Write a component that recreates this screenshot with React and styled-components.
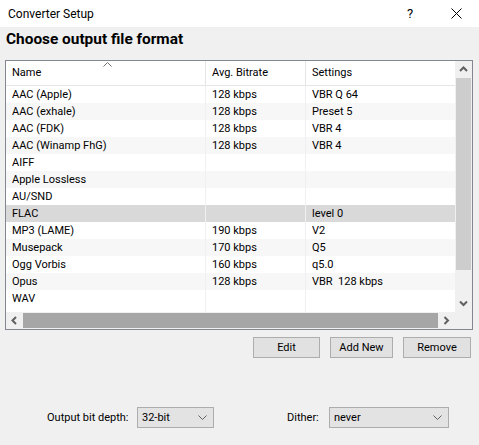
import React from "react";
import styled, { createGlobalStyle } from "styled-components";

const Global = createGlobalStyle`
  html, body { margin: 0; padding: 0; background: #f0f0f0; }
  body { font-family: Roboto, "Liberation Sans", sans-serif; font-size: 11px; color: #000; }
`;

const Window = styled.div`
  width: 479px;
  height: 445px;
  background: #f0f0f0;
  display: flex;
  flex-direction: column;
  overflow: hidden;
`;

const TitleBar = styled.div`
  height: 27px;
  background: #fff;
  display: flex;
  align-items: center;
  padding-left: 8px;
  font-size: 12px;
`;

const TitleText = styled.div`
  flex: 1;
`;

const TitleButton = styled.div`
  width: 46px;
  display: flex;
  justify-content: center;
  align-items: center;
  font-size: 13px;
`;

const Heading = styled.div`
  height: 33px;
  padding: 2px 0 0 6px;
  box-sizing: border-box;
  line-height: 20px;
  font-weight: bold;
  font-size: 15.4px;
`;

const ListBox = styled.div`
  margin-left: 5px;
  width: 468px;
  height: 270px;
  box-sizing: border-box;
  border: 1px solid #828790;
  background: #fff;
  display: grid;
  grid-template-columns: 449px 17px;
  grid-template-rows: 251px 17px;
`;

const TableArea = styled.div`
  overflow: hidden;
  display: flex;
  flex-direction: column;
`;

const HeaderRow = styled.div`
  position: relative;
  height: 25px;
  flex: none;
  box-sizing: border-box;
  border-bottom: 1px solid #e5e5e5;
  display: grid;
  grid-template-columns: 200px 100px 149px;
`;

const HeaderCell = styled.div`
  display: flex;
  align-items: center;
  padding-left: 6px;
  border-right: ${(p) => (p.$last ? "none" : "1px solid #e5e5e5")};
  padding-bottom: 1px;
`;

const SortArrow = styled.svg`
  position: absolute;
  left: 97px;
  top: 1px;
`;

const Row = styled.div`
  height: 17px;
  flex: none;
  display: grid;
  grid-template-columns: 200px 100px 149px;
  background: ${(p) => (p.$selected ? "#d9d9d9" : p.$alt ? "#f7f7f7" : "#fff")};
`;

const Cell = styled.div`
  padding-left: 6px;
  line-height: 17px;
  white-space: pre;
  border-right: ${(p) => (p.$last ? "none" : "1px solid #f0f0f0")};
`;

const Filler = styled.div`
  flex: 1;
  display: grid;
  grid-template-columns: 200px 100px 149px;
`;

const VScroll = styled.div`
  background: #f0f0f0;
  display: flex;
  flex-direction: column;
`;

const HScroll = styled.div`
  background: #f0f0f0;
  display: flex;
`;

const ArrowBtn = styled.div`
  width: 17px;
  height: 17px;
  flex: none;
  display: flex;
  align-items: center;
  justify-content: center;
`;

const VTrack = styled.div`
  flex: 1;
  display: flex;
  flex-direction: column;
  padding: 0 1px;
`;

const VThumb = styled.div`
  height: 192px;
  background: #cdcdcd;
`;

const HTrack = styled.div`
  flex: 1;
  display: flex;
  padding: 1px 0;
`;

const HThumb = styled.div`
  width: 415px;
  background: #a6a6a6;
`;

const Corner = styled.div`
  background: #f0f0f0;
`;

const ButtonRow = styled.div`
  display: flex;
  justify-content: flex-end;
  gap: 10px;
  padding-right: 8px;
  margin-top: 7px;
`;

const Button = styled.div`
  width: ${(p) => p.$w}px;
  height: 21px;
  box-sizing: border-box;
  background: #e1e1e1;
  border: 1px solid #adadad;
  display: flex;
  align-items: center;
  justify-content: center;
`;

const Options = styled.div`
  display: grid;
  grid-template-columns: 90px 77px 73px 42px 120px;
  align-items: center;
  margin-top: 49px;
  padding-left: 47px;
`;

const Label = styled.div`
  white-space: nowrap;
  grid-column: ${(p) => p.$col};
`;

const Select = styled.div`
  height: 21px;
  box-sizing: border-box;
  background: #e3e3e3;
  border: 1px solid #adadad;
  display: flex;
  align-items: center;
  padding-left: 4px;
  padding-right: 6px;
  grid-column: ${(p) => p.$col};
`;

const SelectText = styled.div`
  flex: 1;
`;

const Chevron = ({ dir }) => {
  const pts = {
    up: "1,6 4.5,2.5 8,6",
    down: "1,2.5 4.5,6 8,2.5",
    left: "6,1 2.5,4.5 6,8",
    right: "2.5,1 6,4.5 2.5,8",
  }[dir];
  return (
    <svg width="9" height="9" viewBox="0 0 9 9">
      <polyline points={pts} fill="none" stroke="#606060" strokeWidth="2" />
    </svg>
  );
};

const SmallChevron = () => (
  <svg width="9" height="6" viewBox="0 0 9 6">
    <polyline points="0.5,0.5 4.5,4.5 8.5,0.5" fill="none" stroke="#606060" strokeWidth="1" />
  </svg>
);

const rows = [
  ["AAC (Apple)", "128 kbps", "VBR Q 64"],
  ["AAC (exhale)", "128 kbps", "Preset 5"],
  ["AAC (FDK)", "128 kbps", "VBR 4"],
  ["AAC (Winamp FhG)", "128 kbps", "VBR 4"],
  ["AIFF", "", ""],
  ["Apple Lossless", "", ""],
  ["AU/SND", "", ""],
  ["FLAC", "", "level 0"],
  ["MP3 (LAME)", "190 kbps", "V2"],
  ["Musepack", "170 kbps", "Q5"],
  ["Ogg Vorbis", "160 kbps", "q5.0"],
  ["Opus", "128 kbps", "VBR  128 kbps"],
  ["WAV", "", ""],
];

export default function App() {
  return (
    <>
      <Global />
      <Window>
        <TitleBar>
          <TitleText>Converter Setup</TitleText>
          <TitleButton>?</TitleButton>
          <TitleButton>
            <svg width="11" height="11" viewBox="0 0 11 11">
              <path d="M0.5 0.5 L10.5 10.5 M10.5 0.5 L0.5 10.5" stroke="#000" strokeWidth="1" />
            </svg>
          </TitleButton>
        </TitleBar>
        <Heading>Choose output file format</Heading>
        <ListBox>
          <TableArea>
            <HeaderRow>
              <SortArrow width="9" height="5" viewBox="0 0 9 5">
                <polyline points="0.5,4.5 4.5,0.5 8.5,4.5" fill="none" stroke="#707070" strokeWidth="1" />
              </SortArrow>
              <HeaderCell>Name</HeaderCell>
              <HeaderCell>Avg. Bitrate</HeaderCell>
              <HeaderCell $last>Settings</HeaderCell>
            </HeaderRow>
            {rows.map((r, i) => (
              <Row key={r[0]} $alt={i % 2 === 1} $selected={r[0] === "FLAC"}>
                <Cell>{r[0]}</Cell>
                <Cell>{r[1]}</Cell>
                <Cell $last>{r[2]}</Cell>
              </Row>
            ))}
            <Filler>
              <Cell />
              <Cell />
              <Cell $last />
            </Filler>
          </TableArea>
          <VScroll>
            <ArrowBtn><Chevron dir="up" /></ArrowBtn>
            <VTrack>
              <VThumb />
            </VTrack>
            <ArrowBtn><Chevron dir="down" /></ArrowBtn>
          </VScroll>
          <HScroll>
            <ArrowBtn><Chevron dir="left" /></ArrowBtn>
            <HTrack>
              <HThumb />
            </HTrack>
            <ArrowBtn><Chevron dir="right" /></ArrowBtn>
          </HScroll>
          <Corner />
        </ListBox>
        <ButtonRow>
          <Button $w={67}>Edit</Button>
          <Button $w={63}>Add New</Button>
          <Button $w={68}>Remove</Button>
        </ButtonRow>
        <Options>
          <Label $col="1">Output bit depth:</Label>
          <Select $col="2">
            <SelectText>32-bit</SelectText>
            <SmallChevron />
          </Select>
          <Label $col="4">Dither:</Label>
          <Select $col="5">
            <SelectText>never</SelectText>
            <SmallChevron />
          </Select>
        </Options>
      </Window>
    </>
  );
}
